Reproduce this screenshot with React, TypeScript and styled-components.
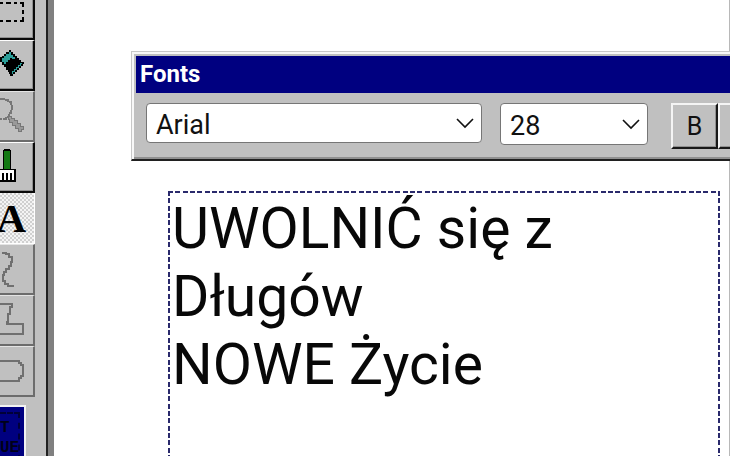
import React, { useState } from "react";
import styled, { createGlobalStyle } from "styled-components";

const GlobalStyle = createGlobalStyle`
  * { box-sizing: border-box; }
  body { margin: 0; background: #fff; font-family: Roboto, sans-serif; overflow: hidden; }
`;

const Workspace = styled.div`
  display: flex;
  height: 100vh;
  overflow: hidden;
`;

const ToolPanel = styled.nav`
  display: flex;
  flex: none;
  flex-direction: column;
  align-items: flex-start;
  padding-right: 11px;
  background: #c0c0c0;
  border-right: 2px solid #202020;
  box-shadow: 6px 0 0 #808080;
  margin-right: 6px;
  overflow: hidden;
`;

const ToolButton = styled.button<{ $state?: "muted" | "active"; $first?: boolean }>`
  flex: none;
  width: 35px;
  height: ${(p) => (p.$first ? 40 : 51)}px;
  padding: 0;
  border: 0 solid;
  border-width: ${(p) => (p.$first ? "0 2px 2px 0" : p.$state === "active" ? "0 1px 1px 0" : "1px 2px 2px 0")};
  border-color: ${(p) =>
    p.$state === "active"
      ? "#fff"
      : p.$state === "muted"
        ? "#e4e4e4 #6c6c6c #6c6c6c #e4e4e4"
        : "#fff #0a0a0a #0a0a0a #fff"};
  background: ${(p) =>
    p.$state === "active"
      ? "repeating-conic-gradient(#d0d0d0 0 25%, #f4f4f4 0 50%) 0 0 / 4px 4px"
      : "#c0c0c0"};
  box-shadow: ${(p) => (p.$state ? "none" : "inset -1px -1px 0 #909090")};
  color: #000;

  svg { display: block; }
`;

const LetterTool = styled.span`
  display: flex;
  justify-content: flex-end;
  padding-right: 8px;
  font: bold 41px/50px "Liberation Serif", serif;
`;

const Preview = styled.div`
  flex: none;
  width: 26px;
  height: 60px;
  margin-top: 8px;
  border-top: 2px solid #f2f2f2;
  border-right: 2px solid #f2f2f2;
  background: #000080;
  padding: 5px 4px 0 0;
`;

const PreviewText = styled.div`
  border-top: 2px dashed #000038;
  border-right: 2px dashed #000038;
  height: 60px;
  padding-top: 4px;
  color: #000018;
  font: bold 16px/20px "Liberation Mono", monospace;
  white-space: pre-line;
`;

const Canvas = styled.main`
  display: flex;
  flex: 1;
  flex-direction: column;
  min-width: 0;
  padding-top: 51px;
  border-right: 1px solid #b8b8b8;
`;

const FontWindow = styled.section`
  flex: none;
  margin: 0 -1px 0 77px;
  border: 1px solid #c8c8c8;
  border-bottom: 2px solid #202020;
  border-right: 0;
  background: #c0c0c0;
  box-shadow: inset 2px 2px 0 #f8f8f8, inset 0 -2px 0 #909090;
  padding: 4px 0 0 4px;
  overflow: hidden;
`;

const TitleBar = styled.h1`
  margin: 0;
  padding: 0 4px;
  background: #000080;
  color: #fff;
  font: bold 24px/37px Roboto, sans-serif;
`;

const FontControls = styled.div`
  display: flex;
  align-items: flex-start;
  padding: 10px 0 10px 10px;
`;

const SelectBox = styled.label<{ $width: number; $gap: number; $height: number }>`
  position: relative;
  flex: none;
  width: ${(p) => p.$width}px;
  height: ${(p) => p.$height}px;
  margin-right: ${(p) => p.$gap}px;

  select {
    appearance: none;
    display: block;
    width: 100%;
    height: 100%;
    padding: 3px 36px 0 9px;
    border: 1px solid #767676;
    border-radius: 4px;
    background: #fff;
    color: #111;
    font: 27px Roboto, sans-serif;
  }

  svg {
    position: absolute;
    right: 7px;
    top: 50%;
    transform: translateY(-50%);
    pointer-events: none;
  }
`;

const StyleButton = styled.button`
  flex: none;
  width: 47px;
  height: 46px;
  padding: 0;
  border: 2px solid;
  border-color: #f4f4f4 #181818 #181818 #f4f4f4;
  box-shadow: inset -1px -1px 0 #909090;
  background: #c0c0c0;
  color: #111;
  font: 25px Roboto, sans-serif;
`;

const navyDashes = (angle: string) =>
  `linear-gradient(${angle}, #2a2a6c 0 5px, transparent 5px 7px, #2a2a6c 7px 12px, transparent 12px 15px, #2a2a6c 15px 20px, transparent 20px 22px)`;

const TextFrame = styled.textarea`
  flex: 1;
  margin: 30px 9px 0 114px;
  min-height: 0;
  padding: 4px;
  border: 0;
  outline: 0;
  resize: none;
  overflow: hidden;
  background:
    ${navyDashes("90deg")} 0 0 / 22px 2px repeat-x,
    ${navyDashes("180deg")} 0 0 / 2px 22px repeat-y,
    ${navyDashes("180deg")} 100% 0 / 2px 22px repeat-y;
  color: #080808;
  font: 57px/68px Roboto, sans-serif;
`;

const Chevron = () => (
  <svg width="20" height="12" viewBox="0 0 20 12" fill="none" stroke="#111" strokeWidth="1.6" aria-hidden="true">
    <path d="M2 2l8 8 8-8" />
  </svg>
);

const Drawing = ({ children, height = 48 }: { children: React.ReactNode; height?: number }) => (
  <svg width="33" height={height} viewBox={`0 0 33 ${height}`} fill="none" shapeRendering="crispEdges" aria-hidden="true">
    {children}
  </svg>
);

export default function App() {
  const [text, setText] = useState("UWOLNIĆ się z\nDługów\nNOWE Życie");
  const [family, setFamily] = useState("Arial");
  const [size, setSize] = useState("28");

  return (
    <>
      <GlobalStyle />
      <Workspace>
        <ToolPanel aria-label="Tools">
          <ToolButton $first aria-label="Select">
            <Drawing height={38}>
              <path d="M0 3h3m3 0h5m3 0h3m3 0h4M0 21h3m3 0h5m3 0h3m3 0h4M23 2v5m0 3v4m0 3v5" stroke="#000" strokeWidth="2" />
            </Drawing>
          </ToolButton>
          <ToolButton aria-label="Fill">
            <Drawing>
              <path d="M0 16h2v-1h2v-2h2v-2h3V9h2v2h2v2h2v2h2v2h2v2h2v2h3v2h-1v2h-2v2h-2v2h-2v2h-2v2h-2v2h-3v-2H9v-2H8v-2H6v-3H4v-2H2v-3H0z" fill="#000" />
              <path d="M2 20v-3h2v-2h2v-2h3v-2h2v3h2v2h2v2h-3v-1h-2v2H8v2H6v2H4v-2H2z" fill="#2b9d98" />
              <path d="M12 33v-3h2v-2h2v-2h2v-2h2v-2h2" stroke="#2b9d98" strokeWidth="1" />
            </Drawing>
          </ToolButton>
          <ToolButton $state="muted" aria-label="Zoom">
            <Drawing>
              <path d="M0 7h5v1h3v2h3v3h1v4h-1v4H9v4H6v2H0" stroke="#777" strokeWidth="2" strokeDasharray="5 1" />
              <path d="M8 24h3v2h3v2h3v3h3v3h3v3h-2v2h-3v-3h-3v-3h-3v-3h-3v-3H8z" fill="#999" stroke="#777" strokeWidth="1" />
            </Drawing>
          </ToolButton>
          <ToolButton aria-label="Brush">
            <Drawing>
              <path d="M4 6h6v1h1v19h5v13H0V26h3V7h1z" fill="#000" />
              <path d="M4 8h6v18H4z" fill="#137813" />
              <path d="M0 27h14v10h-2v-7h-2v7H8v-7H6v7H4v-7H2v7H0z" fill="#fff" />
            </Drawing>
          </ToolButton>
          <ToolButton $state="active" aria-label="Text" aria-pressed="true">
            <LetterTool>A</LetterTool>
          </ToolButton>
          <ToolButton $state="muted" aria-label="Curve">
            <Drawing>
              <path d="M2 8h4v1h3v3h3v5h-1v4H9v3H6v3H4v3H3v6h2v3h3v2h6" stroke="#707070" strokeWidth="2" />
            </Drawing>
          </ToolButton>
          <ToolButton $state="muted" aria-label="Polygon">
            <Drawing>
              <path d="M0 8h12v3h-2v7H8v8H7v2h16v10H0" stroke="#707070" strokeWidth="2" />
            </Drawing>
          </ToolButton>
          <ToolButton $state="muted" aria-label="Rounded rectangle">
            <Drawing>
              <path d="M0 14h19v2h2v2h2v11h-2v2h-2v3H0" stroke="#707070" strokeWidth="2" />
            </Drawing>
          </ToolButton>
          <Preview>
            <PreviewText>{"T\nUE"}</PreviewText>
          </Preview>
        </ToolPanel>
        <Canvas>
          <FontWindow>
            <TitleBar>Fonts</TitleBar>
            <FontControls>
              <SelectBox $width={336} $gap={18} $height={40}>
                <select aria-label="Font family" value={family} onChange={(e) => setFamily(e.target.value)}>
                  <option>Arial</option>
                </select>
                <Chevron />
              </SelectBox>
              <SelectBox $width={148} $gap={23} $height={42}>
                <select aria-label="Font size" value={size} onChange={(e) => setSize(e.target.value)}>
                  <option>28</option>
                </select>
                <Chevron />
              </SelectBox>
              <StyleButton aria-label="Bold">B</StyleButton>
              <StyleButton aria-label="Italic" />
            </FontControls>
          </FontWindow>
          <TextFrame aria-label="Text" spellCheck={false} value={text} onChange={(e) => setText(e.target.value)} />
        </Canvas>
      </Workspace>
    </>
  );
}
